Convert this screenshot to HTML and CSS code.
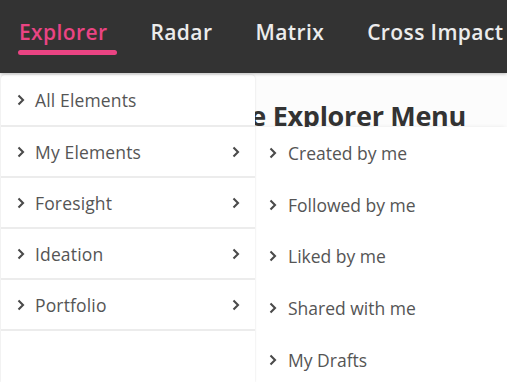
FILE: index.html
```html
<!DOCTYPE html>
<html lang="en">
<head>
<meta charset="utf-8">
<link rel="stylesheet" href="styles.css">
</head>
<body>
<header class="nav">
  <a class="nav-item active">Explorer</a>
  <a class="nav-item">Radar</a>
  <a class="nav-item">Matrix</a>
  <a class="nav-item">Cross Impact</a>
</header>
<main class="page">
  <h1 class="title">Welcome to the Explorer Menu</h1>
  <nav class="menu">
    <div class="row"><span class="chev"><svg viewBox="0 0 8 12"><path d="M1.5 1.5 6 6l-4.5 4.5"/></svg></span><span class="label">All Elements</span></div>
    <div class="row"><span class="chev"><svg viewBox="0 0 8 12"><path d="M1.5 1.5 6 6l-4.5 4.5"/></svg></span><span class="label">My Elements</span><span class="chev end"><svg viewBox="0 0 8 12"><path d="M1.5 1.5 6 6l-4.5 4.5"/></svg></span></div>
    <div class="row"><span class="chev"><svg viewBox="0 0 8 12"><path d="M1.5 1.5 6 6l-4.5 4.5"/></svg></span><span class="label">Foresight</span><span class="chev end"><svg viewBox="0 0 8 12"><path d="M1.5 1.5 6 6l-4.5 4.5"/></svg></span></div>
    <div class="row"><span class="chev"><svg viewBox="0 0 8 12"><path d="M1.5 1.5 6 6l-4.5 4.5"/></svg></span><span class="label">Ideation</span><span class="chev end"><svg viewBox="0 0 8 12"><path d="M1.5 1.5 6 6l-4.5 4.5"/></svg></span></div>
    <div class="row"><span class="chev"><svg viewBox="0 0 8 12"><path d="M1.5 1.5 6 6l-4.5 4.5"/></svg></span><span class="label">Portfolio</span><span class="chev end"><svg viewBox="0 0 8 12"><path d="M1.5 1.5 6 6l-4.5 4.5"/></svg></span></div>
  </nav>
  <nav class="submenu">
    <div class="sub-row"><span class="chev"><svg viewBox="0 0 8 12"><path d="M1.5 1.5 6 6l-4.5 4.5"/></svg></span><span class="label">Created by me</span></div>
    <div class="sub-row"><span class="chev"><svg viewBox="0 0 8 12"><path d="M1.5 1.5 6 6l-4.5 4.5"/></svg></span><span class="label">Followed by me</span></div>
    <div class="sub-row"><span class="chev"><svg viewBox="0 0 8 12"><path d="M1.5 1.5 6 6l-4.5 4.5"/></svg></span><span class="label">Liked by me</span></div>
    <div class="sub-row"><span class="chev"><svg viewBox="0 0 8 12"><path d="M1.5 1.5 6 6l-4.5 4.5"/></svg></span><span class="label">Shared with me</span></div>
    <div class="sub-row"><span class="chev"><svg viewBox="0 0 8 12"><path d="M1.5 1.5 6 6l-4.5 4.5"/></svg></span><span class="label">My Drafts</span></div>
  </nav>
</main>
</body>
</html>
```
FILE: styles.css
```css
* { box-sizing: border-box; }
html, body { margin: 0; height: 100%; overflow: hidden; }
body {
  font-family: "Open Sans", "Noto Sans", sans-serif;
  background: #fff;
  color: #555;
}
.nav {
  height: 73px;
  background: #333;
  display: flex;
  align-items: flex-start;
  padding-left: 19px;
  white-space: nowrap;
  box-shadow: 0 1px 3px rgba(0,0,0,0.25);
  position: relative;
  z-index: 3;
}
.nav-item {
  position: relative;
  display: block;
  color: #ececec;
  font-size: 21px;
  font-weight: 600;
  line-height: 28px;
  padding-top: 18px;
  margin-right: 43px;
  letter-spacing: 0.4px;
}
.nav-item.active { color: #ea4483; }
.nav-item.active::after {
  content: "";
  position: absolute;
  left: -1px;
  top: 50px;
  width: 99px;
  height: 5px;
  border-radius: 3px;
  background: #ea4483;
}
.page {
  position: relative;
  height: calc(100% - 73px);
  background: #fcfcfc;
}
.title {
  margin: 0;
  padding: 25px 0 0 0;
  font-size: 27px;
  line-height: 36px;
  font-weight: 700;
  color: #333;
  white-space: nowrap;
  text-align: right;
  width: 466px;
  letter-spacing: -0.3px;
}
.menu {
  position: absolute;
  left: 1px;
  top: 2px;
  width: 254px;
  bottom: 0;
  background: #fff;
  border-radius: 4px 4px 0 0;
  box-shadow: 0 0 2px rgba(0,0,0,0.15);
  z-index: 2;
}
.row {
  height: 51px;
  display: flex;
  align-items: center;
  padding: 0 15px 0 16px;
  border-bottom: 2px solid #ececec;
  font-size: 17.5px;
}
.row:first-child { height: 52px; }
.chev {
  width: 8px;
  height: 12px;
  display: inline-flex;
  flex: none;
}
.chev svg {
  width: 8px;
  height: 12px;
  fill: none;
  stroke: #4a4a4a;
  stroke-width: 2.1;
}
.label {
  margin-left: 10px;
  flex: 1;
  letter-spacing: 0.15px;
}
.chev.end { margin-left: auto; }
.submenu {
  position: absolute;
  left: 255px;
  right: 0;
  top: 54px;
  bottom: 0;
  background: #fff;
  box-shadow: -2px 0 4px rgba(0,0,0,0.08);
  z-index: 1;
}
.sub-row {
  height: 51.7px;
  display: flex;
  align-items: center;
  padding-left: 14px;
  font-size: 17.5px;
}
.sub-row .label { margin-left: 11px; letter-spacing: 0; }
```
